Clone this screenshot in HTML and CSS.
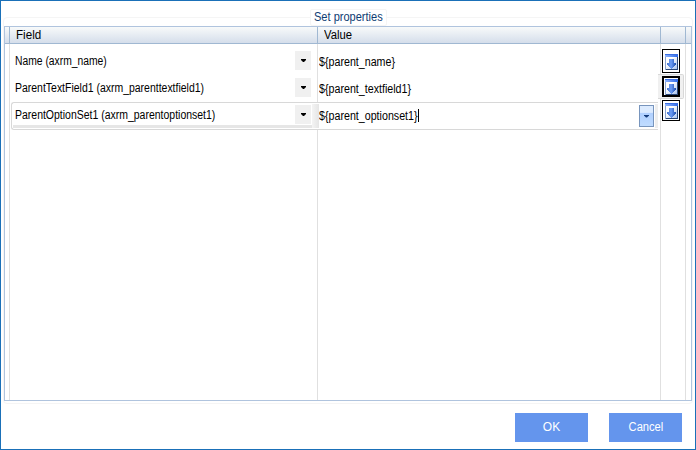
FILE: index.html
```
<!DOCTYPE html>
<html lang="en">
<head>
<meta charset="utf-8">
<title>Set properties</title>
<link rel="stylesheet" href="styles.css">
</head>
<body>
<svg class="defs" aria-hidden="true">
  <defs>
    <linearGradient id="page" x2="1" y2="1"><stop offset="0.35" stop-color="#fff"/><stop offset="1" stop-color="#a9c4f0"/></linearGradient>
    <linearGradient id="bar"><stop offset="0" stop-color="#8fb3fc"/><stop offset="1" stop-color="#2f6bea"/></linearGradient>
    <linearGradient id="arrow"><stop offset="0" stop-color="#4775d0"/><stop offset="0.45" stop-color="#6d9df5"/><stop offset="1" stop-color="#1d4eb0"/></linearGradient>
    <symbol id="insert" viewBox="0 0 13 16">
      <path fill="#8aa2cf" d="M0 0h13v16H0z"/>
      <path fill="#294779" d="M12 3h1v13H1v-1h11z"/>
      <path fill="url(#page)" d="M1 3h11v12H1z"/>
      <path fill="url(#bar)" d="M0 0h13v3H0z"/>
      <path fill="#3c70e4" d="M0 0h13v1H0z"/>
      <path fill="url(#arrow)" d="M4 5h5v4h2v2h-1v1H9v1H8v1H7v1H6v-1H5v-1H4v-1H3v-1H2V9h2z"/>
    </symbol>
  </defs>
</svg>
<main class="window">
  <section class="group">
    <h1 class="title"><span>Set properties</span></h1>
    <div class="table">
      <div class="gutter"><div class="head"></div></div>
      <div class="col fields">
        <div class="head"><span class="h-field">Field</span></div>
        <div class="cell"><span class="t1">Name (axrm_name)</span><button class="drop"><i></i></button></div>
        <div class="cell"><span class="t2">ParentTextField1 (axrm_parenttextfield1)</span><button class="drop"><i></i></button></div>
        <div class="cell active"><span class="t3">ParentOptionSet1 (axrm_parentoptionset1)</span><button class="drop"><i></i></button></div>
      </div>
      <div class="col values">
        <div class="head"><span class="h-value">Value</span></div>
        <div class="cell"><span class="v1">${parent_name}</span></div>
        <div class="cell"><span class="v2">${parent_textfield1}</span></div>
        <div class="cell active"><span class="v3">${parent_optionset1}</span><b class="caret"></b><button class="drop blue"><i></i></button></div>
      </div>
      <div class="col actions">
        <div class="head"></div>
        <button class="insert first"><svg><use href="#insert"/></svg></button>
        <div class="selected"><button class="insert focus"><svg><use href="#insert"/></svg></button></div>
        <button class="insert"><svg><use href="#insert"/></svg></button>
      </div>
      <div class="gutter end"><div class="head"></div></div>
    </div>
  </section>
  <footer class="buttons"><button class="ok"><span>OK</span></button><button class="cancel"><span>Cancel</span></button></footer>
</main>
</body>
</html>
```
FILE: styles.css
```
* { box-sizing: border-box; }
body { margin: 0; font: 12px/14px "Liberation Sans", Arial, sans-serif; color: #000; background: #fff; }
button { font: inherit; padding: 0; border: 0; border-radius: 0; display: block; }
span { display: inline-block; white-space: nowrap; transform-origin: 0 50%; }
.defs { position: absolute; width: 0; height: 0; }
.window { width: 696px; height: 450px; border: 1px solid #1a70b8; padding: 16px 2px 0 3px; }
.group { width: 690px; height: 387px; border: 1px solid #f5f5f5; border-radius: 4px; margin-left: -1px; }
.title { width: 77px; height: 17px; margin: -9px auto 0 306px; padding-left: 3px; border: 1px solid #f5f5f5; border-radius: 2px; background: #fff; color: #0f3d73; font-size: 12px; font-weight: 400; line-height: 14px; }
.title span { transform: scaleX(.92); }
.table { display: grid; grid-template-columns: 5px 308px 343px 25px 5px; width: 688px; height: 375px; border: 1px solid #b0c4de; }
.gutter, .col { border-right: 1px solid #e0e0e0; }
.gutter.end { border-right: 0; }
.col { display: flex; flex-direction: column; }
.head { height: 17px; margin-right: -1px; border-right: 1px solid #a0b8d2; border-bottom: 1px solid #a0b8d2; background: linear-gradient(#f8fafa, #d5deeb); padding: 1px 6px 0; line-height: 15px; }
.gutter .head { padding: 0; }
.gutter.end .head { margin: 0; border-right: 0; }
.col .head { margin-bottom: 4px; }
.h-field { transform: scaleX(.97); }
.h-value { transform: scaleX(.94); }
.cell { display: flex; justify-content: space-between; height: 27px; padding: 3px 6px 0 5px; }
.cell span { margin-top: 3px; }
.t1 { transform: scaleX(.86); }
.t2 { transform: scaleX(.872); }
.t3 { transform: scaleX(.873); }
.v1, .v2, .v3 { transform: scaleX(.89); }
.v3 { width: 99px; }
.drop { width: 16px; height: 19px; background: #f0f0f0; display: flex; align-items: center; justify-content: center; }
.drop i { width: 5px; height: 3px; margin-left: 1px; background: #000; clip-path: polygon(0 0, 100% 0, 100% 1px, 3px 100%, 2px 100%, 0 1px); }
.cell.active { height: 28px; border: 1px solid #d8d8d8; border-right: 0; background: #fff; }
.fields .active { margin: 0 -2px 0 1px; padding: 2px 8px 0 3px; border-radius: 3px 0 0 3px; background: linear-gradient(90deg, #f4f4f4, #e5e5e5) right 0 top 1px / 7px 24px no-repeat, linear-gradient(#e6e6e6, #e6e6e6) 1px 22px / 100% 3px no-repeat, #fff; position: relative; }
.values .cell { padding-left: 1px; }
.values .cell span { margin-top: 4px; }
.values .active { border-left: 0; width: 340px; padding: 2px 4px 0 1px; justify-content: flex-start; background: linear-gradient(#eee, #eee) right 0 top 1px / 3px 24px no-repeat; position: relative; }
.caret { width: 1px; height: 13px; margin-top: 4px; background: #000; }
.blue { width: 15px; height: 22px; margin-left: auto; border: 1px solid #7895bd; background: linear-gradient(#dcebff 0 32%, #b0d0ff 36%, #c0dcff); }
.blue i { margin: 0; background: #153c7c; }
.insert { display: flex; align-items: flex-start; flex: none; width: 18px; height: 21px; margin-left: 1px; border: 1px solid #000; background: #fff; padding: 2px 0 0 2px; }
.insert svg { display: block; width: 13px; height: 16px; }
.insert.first { height: 24px; margin-top: 1px; padding-top: 4px; }
.selected { flex: none; width: 26px; height: 25px; margin: 1px 0 1px -3px; padding: 1px 0 0 3px; border: 1px solid #d8d8d8; border-left: 0; border-radius: 0 2px 2px 0; background: #f0f0f0; position: relative; }
.insert.focus { border-width: 2px; padding: 1px 0 0 1px; }
.buttons { display: flex; justify-content: flex-end; gap: 21px; margin: 9px 11px 0 0; }
.buttons button { width: 73px; height: 29px; background: #6495ed; color: #fff; line-height: 27px; }
.buttons span { transform-origin: 60% 50%; transform: scaleX(.93); }
.buttons .ok span { transform: none; }
```
